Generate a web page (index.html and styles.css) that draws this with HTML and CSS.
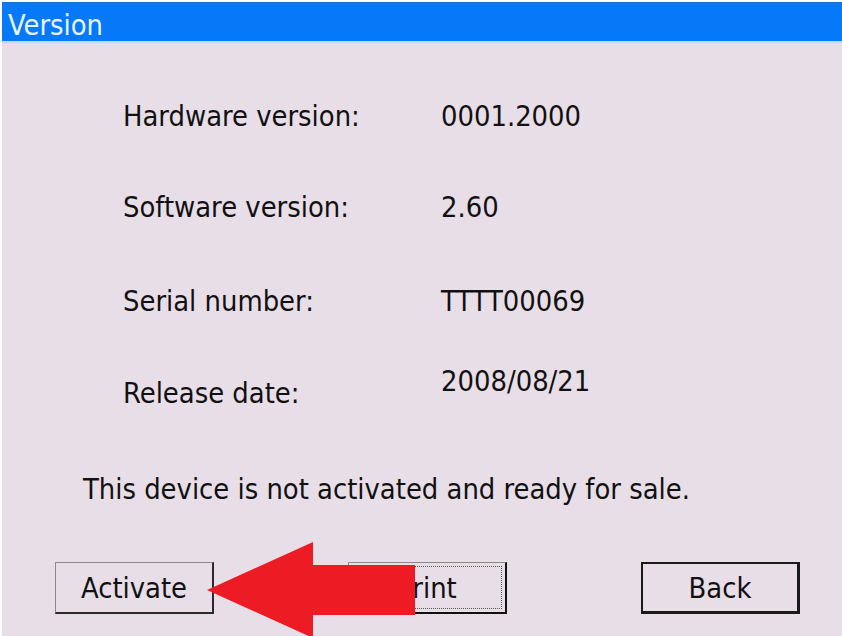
FILE: index.html
```html
<!DOCTYPE html>
<html lang="en">
<head>
<meta charset="utf-8">
<title>Version</title>
<link rel="stylesheet" href="styles.css">
</head>
<body>
<div class="window">
  <div class="titlebar">Version</div>
  <div class="content">
    <div class="info">
      <div class="row row-hw"><span class="label">Hardware version:</span><span class="value">0001.2000</span></div>
      <div class="row row-sw"><span class="label">Software version:</span><span class="value">2.60</span></div>
      <div class="row row-sn"><span class="label">Serial number:</span><span class="value">TTTT00069</span></div>
      <div class="row row-rd"><span class="label">Release date:</span><span class="value">2008/08/21</span></div>
    </div>
    <p class="status">This device is not activated and ready for sale.</p>
    <div class="buttons">
      <button class="btn btn-activate">Activate</button>
      <button class="btn btn-print"><span class="focus">Print</span></button>
      <button class="btn btn-back">Back</button>
    </div>
  </div>
</div>
<svg class="arrow" width="842" height="636" viewBox="0 0 842 636" aria-hidden="true">
  <polygon points="207,590 313,542 313,565 415,565 415,615 313,615 313,638" fill="#ed1c24"/>
</svg>
</body>
</html>
```
FILE: styles.css
```css
html, body {
  margin: 0;
  padding: 0;
  background: #ffffff;
  overflow: hidden;
}
body {
  width: 842px;
  height: 636px;
  font-family: "DejaVu Sans Condensed", "DejaVu Sans", sans-serif;
  font-stretch: condensed;
  font-size: 28.8px;
  line-height: 32px;
  color: #111111;
}
.window {
  margin: 2px 0 0 2px;
  height: 634px;
  background: #e8dee8;
  display: flex;
  flex-direction: column;
}
.titlebar {
  height: 35px;
  padding-top: 3px;
  border-top: 1px solid #1a6ed6;
  border-bottom: 2px solid #c9d6ee;
  background: #0579f7;
  color: #e8f4ff;
  padding-left: 6px;
  line-height: 38px;
  box-sizing: content-box;
}
.content {
  flex: 1;
  display: flex;
  flex-direction: column;
}
.info {
  padding-left: 121px;
  padding-top: 57px;
  display: flex;
  flex-direction: column;
}
.row {
  display: grid;
  grid-template-columns: 318px auto;
  align-items: start;
}
.row-sw { margin-top: 59px; }
.row-sn { margin-top: 62px; }
.row-rd { margin-top: 48px; }
.row-rd .label { padding-top: 12px; }
.status {
  margin: 64px 0 0 0;
  padding-left: 81px;
}
.buttons {
  margin-top: 57px;
  padding-left: 53px;
  display: flex;
  gap: 134px;
}
.btn {
  width: 159px;
  height: 52px;
  box-sizing: border-box;
  background: #e8dee8;
  font: inherit;
  color: #111111;
  padding: 0;
  display: flex;
  align-items: center;
  justify-content: center;
}
.btn-activate {
  border-style: solid;
  border-width: 1px 2px 2px 1px;
  border-color: #8a8a8a #2a2a2a #2a2a2a #8a8a8a;
}
.btn-print {
  border-style: solid;
  border-width: 1px 2px 2px 1px;
  border-color: #8a8a8a #111111 #111111 #8a8a8a;
  padding: 3px;
}
.btn-print .focus {
  flex: 1;
  align-self: stretch;
  border: 1px dotted #555555;
  display: flex;
  align-items: center;
  justify-content: center;
}
.btn-back {
  border: 2px solid #1a1a1a;
  border-width: 2px 3px 3px 2px;
}
.arrow {
  position: absolute;
  left: 0;
  top: 0;
  pointer-events: none;
}
```
